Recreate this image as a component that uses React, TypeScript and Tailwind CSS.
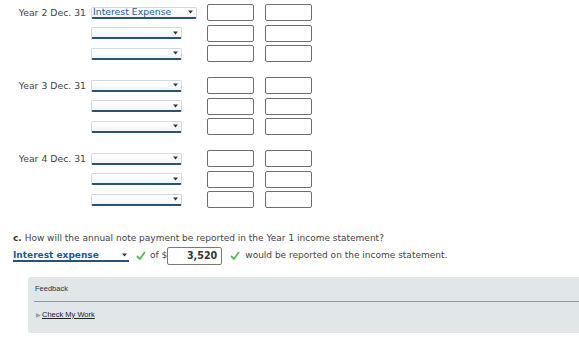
import React from "react";

const font = { fontFamily: '"DejaVu Sans", Verdana, sans-serif' };

function Caret() {
  return (
    <svg width="5" height="4" viewBox="0 0 5 4" className="shrink-0">
      <path d="M0 0.5h5L2.5 3.5z" fill="#333" />
    </svg>
  );
}

function Select({ value, wide }: { value?: string; wide?: boolean }) {
  return (
    <div
      className={`h-[12px] ${wide ? "w-[106px]" : "w-[91px]"} flex items-center justify-between pl-[1px] pr-[3px] bg-gradient-to-b from-white to-[#f2f6fa] border border-[#d6d9dc] border-b-2 border-b-[#2c5273] rounded-[2px]`}
    >
      <span className="text-[9.3px] leading-none text-[#1d5a96]">{value ?? ""}</span>
      <Caret />
    </div>
  );
}

function Box() {
  return <div className="h-[17px] w-[47px] border border-[#6e6e6e] rounded-[2px] bg-white" />;
}

function Check() {
  return (
    <svg width="10" height="10" viewBox="0 0 10 10" className="shrink-0">
      <path d="M1.5 5.5L4 8L8.5 1.5" fill="none" stroke="#5cb85c" strokeWidth="1.8" strokeLinecap="round" strokeLinejoin="round" />
    </svg>
  );
}

const groups = [
  { label: "Year 2 Dec. 31", first: "Interest Expense" },
  { label: "Year 3 Dec. 31" },
  { label: "Year 4 Dec. 31" },
];

export default function App() {
  return (
    <div className="w-[579px] h-[348px] bg-white overflow-hidden text-[#444]" style={font}>
      {/* Journal rows */}
      <div className="pt-[4px] flex flex-col gap-[15px]">
        {groups.map((g) => (
          <div key={g.label} className="flex flex-col gap-[3.5px]">
            {[0, 1, 2].map((i) => (
              <div key={i} className="flex items-center h-[17px]">
                <div className="w-[86px] text-right text-[9.3px] leading-none whitespace-nowrap">
                  {i === 0 ? g.label : ""}
                </div>
                <div className="w-[121px] pl-[5px] flex items-center">
                  <Select value={i === 0 ? g.first : undefined} wide={i === 0 && !!g.first} />
                </div>
                <div className="flex gap-[11px]">
                  <Box />
                  <Box />
                </div>
              </div>
            ))}
          </div>
        ))}
      </div>

      {/* Part c */}
      <div className="pl-[13px] mt-[26px]">
        <p className="text-[9px] leading-none whitespace-nowrap">
          <span className="font-bold text-[#333]">c.</span> How will the annual note payment be reported in the Year 1 income statement?
        </p>
        <div className="flex items-center mt-[4px] h-[18px] text-[9px] whitespace-nowrap">
          <div className="w-[116px] h-[12px] flex items-center justify-between border-b-2 border-b-[#2c5273] pr-[2px]">
            <span className="font-bold text-[#1d5a96] text-[9px] leading-none">Interest expense</span>
            <Caret />
          </div>
          <span className="ml-[7px]"><Check /></span>
          <span className="ml-[4px]">of $</span>
          <div className="h-[18px] w-[55px] border border-[#7a7a7a] rounded-[2px] flex items-center justify-end pr-[4px] font-bold text-[#333] text-[9.6px]">
            3,520
          </div>
          <span className="ml-[8px]"><Check /></span>
          <span className="ml-[5px]">would be reported on the income statement.</span>
        </div>
      </div>

      {/* Feedback */}
      <div
        className="ml-[28px] mt-[12px] h-[56px] bg-[#e1e6e9] rounded-l-[3px] pl-[6px] pt-[8px] text-[#333]"
        style={{ fontFamily: '"Liberation Sans", Arial, sans-serif' }}
      >
        <div className="text-[7.5px] leading-none pl-[1px]">Feedback</div>
        <div className="mt-[8px] h-[1.5px] bg-[#8e9a9f]" />
        <div className="mt-[9px] flex items-center text-[7.5px] leading-none pl-[2px]">
          <span className="text-[#999] text-[6px] mr-[1px]">▶</span>
          <span className="underline text-[#222]">Check My Work</span>
        </div>
      </div>
    </div>
  );
}
